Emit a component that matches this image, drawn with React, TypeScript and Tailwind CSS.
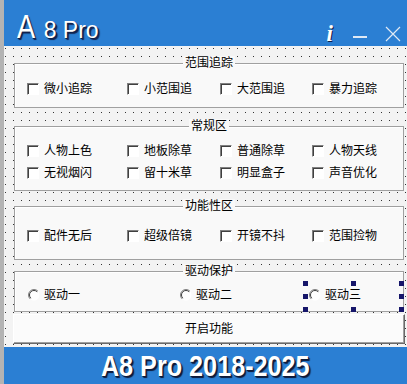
import type { ReactNode } from "react";

const font = "font-['Liberation_Sans','Noto_Sans_CJK_SC',sans-serif]";

const rangeItems = ["微小追踪", "小范围追", "大范围追", "暴力追踪"];
const normalItems = ["人物上色", "地板除草", "普通除草", "人物天线", "无视烟闪", "留十米草", "明显盒子", "声音优化"];
const funcItems = ["配件无后", "超级倍镜", "开镜不抖", "范围捡物"];

const Check = ({ label }: { label: string }) => (
  <div className="flex items-center h-[14px]">
    <span className="w-[12px] h-[12px] bg-white border border-t-[#808080] border-l-[#808080] border-r-white border-b-white shadow-[inset_1px_1px_0_#404040]" />
    <span className="ml-[5px] text-[12px] leading-[14px] text-black">{label}</span>
  </div>
);

const Radio = ({ label }: { label: string }) => (
  <div className="flex items-center h-[14px]">
    <svg width="12" height="12" viewBox="0 0 12 12">
      <circle cx="6" cy="6" r="5.5" fill="#fff" />
      <path d="M9.9 2.1 A5.5 5.5 0 0 0 2.1 9.9" fill="none" stroke="#808080" strokeWidth="1" />
      <path d="M9.2 2.8 A4.5 4.5 0 0 0 2.8 9.2" fill="none" stroke="#404040" strokeWidth="1" />
    </svg>
    <span className="ml-[4px] text-[12px] leading-[14px] text-black">{label}</span>
  </div>
);

const GroupBox = ({ title, className, children }: { title: string; className: string; children: ReactNode }) => (
  <div className={`relative bg-[#f9f9f9] border border-[#a0a0a0] shadow-[inset_1px_1px_0_#fff] ${className}`}>
    <span className="absolute top-[-8px] left-1/2 -translate-x-1/2 px-[2px] bg-[#f9f9f9] text-[12px] leading-[14px] text-black whitespace-nowrap">
      {title}
    </span>
    {children}
  </div>
);

const Handle = ({ x, y }: { x: number; y: number }) => (
  <span className="absolute w-[5px] h-[5px] bg-[#16166a]" style={{ left: x - 2, top: y - 2 }} />
);

export default function App() {
  return (
    <div className={`w-[407px] h-[384px] overflow-hidden flex flex-col border-l-4 border-[#b3b3b3] ${font}`}>
      {/* title bar */}
      <div className="h-[46px] bg-[#2b7fd3] flex items-start pl-[13px] pr-[6px] shrink-0">
        <div className="flex items-baseline pt-[9px] text-white [text-shadow:1px_1px_0_#10204a,2px_2px_1px_#10204a]">
          <span className="text-[34px] leading-none inline-block scale-x-[0.8] origin-left -mr-[5px]">A</span>
          <span className="ml-[9px] text-[23px] leading-none">8 Pro</span>
        </div>
        <div className="ml-auto flex items-center mt-[22px] text-white">
          <span className="font-['Liberation_Serif',serif] font-bold italic text-[23px] leading-none [text-shadow:1px_1px_0_#10204a]">i</span>
          <span className="ml-[20px] mt-[6px] w-[14px] h-[2px] bg-[#dfe9f5]" />
          <svg className="ml-[18px]" width="16" height="16" viewBox="0 0 16 16">
            <path d="M1 1 L15 15 M15 1 L1 15" stroke="#dfe9f5" strokeWidth="1.2" />
          </svg>
        </div>
      </div>

      {/* form area with designer grid */}
      <div className="h-[301px] shrink-0 flex flex-col pl-[10px] pr-[3px] pt-[17px] bg-[#f3f3f3] bg-[conic-gradient(from_270deg_at_1px_1px,#333_90deg,transparent_0)] bg-size-[8px_8px] bg-position-[1px_2px]">
        <GroupBox title="范围追踪" className="h-[45px] pt-[18px] pl-[12px]">
          <div className="grid grid-cols-[100px_93px_92px_1fr]">
            {rangeItems.map((t) => (
              <Check key={t} label={t} />
            ))}
          </div>
        </GroupBox>

        <GroupBox title="常规区" className="mt-[18px] h-[65px] pt-[17px] pl-[12px]">
          <div className="grid grid-cols-[100px_93px_92px_1fr] gap-y-[8px]">
            {normalItems.map((t) => (
              <Check key={t} label={t} />
            ))}
          </div>
        </GroupBox>

        <GroupBox title="功能性区" className="mt-[15px] h-[54px] pt-[22px] pl-[12px]">
          <div className="grid grid-cols-[100px_93px_92px_1fr]">
            {funcItems.map((t) => (
              <Check key={t} label={t} />
            ))}
          </div>
        </GroupBox>

        <GroupBox title="驱动保护" className="mt-[11px] h-[41px] pt-[16px] pl-[13px]">
          <div className="grid grid-cols-[152px_129px_1fr]">
            <Radio label="驱动一" />
            <Radio label="驱动二" />
            <Radio label="驱动三" />
          </div>
          {/* designer selection handles */}
          <Handle x={290} y={11} />
          <Handle x={338} y={11} />
          <Handle x={386} y={11} />
          <Handle x={290} y={24} />
          <Handle x={386} y={24} />
          <Handle x={290} y={37} />
          <Handle x={338} y={37} />
          <Handle x={386} y={37} />
        </GroupBox>

        <button className="mt-[2px] -ml-px -mr-px h-[30px] bg-[#fbfbfb] border border-t-white border-l-white border-r-[#696969] border-b-[#696969] shadow-[inset_-1px_-1px_0_#a0a0a0] text-[12px] leading-[14px] text-black">
          开启功能
        </button>
      </div>

      {/* bottom banner */}
      <div className="flex-1 bg-[#2b7fd3] flex items-center justify-center">
        <span className="inline-block scale-x-[0.84] text-white font-bold text-[30px] leading-none whitespace-nowrap [text-shadow:1px_1px_0_#0e1a3a,2px_2px_1px_#0e1a3a]">
          A8 Pro 2018-2025
        </span>
      </div>
    </div>
  );
}
